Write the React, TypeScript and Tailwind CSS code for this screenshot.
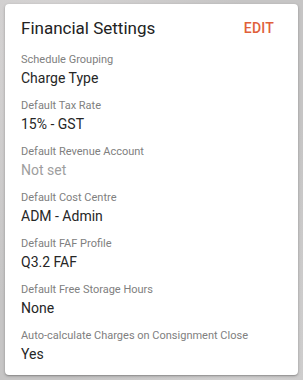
const fields = [
  { label: 'Schedule Grouping', value: 'Charge Type' },
  { label: 'Default Tax Rate', value: '15% - GST' },
  { label: 'Default Revenue Account', value: 'Not set', muted: true },
  { label: 'Default Cost Centre', value: 'ADM - Admin' },
  { label: 'Default FAF Profile', value: 'Q3.2 FAF' },
  { label: 'Default Free Storage Hours', value: 'None' },
  { label: 'Auto-calculate Charges on Consignment Close', value: 'Yes' },
];

export default function App() {
  return (
    <div
      className="w-[303px] h-[380px] overflow-hidden bg-[#c6c5c5] bg-[radial-gradient(ellipse_at_15%_10%,#d6d4d4_0%,transparent_55%),radial-gradient(ellipse_at_80%_95%,#d2d1d1_0%,transparent_50%)] pt-[4px] pl-[5px] pr-[5px]"
      style={{ fontFamily: 'Roboto, "Liberation Sans", sans-serif' }}
    >
      <div className="bg-white rounded-[4px] shadow-[0_1px_3px_rgba(0,0,0,0.25),0_1px_1px_rgba(0,0,0,0.12)] h-[371px] pt-3 pb-3 pl-4 pr-4">
        {/* Header */}
        <div className="flex items-center justify-between h-6">
          <h2 className="text-[17px] leading-6 text-[#222222] font-normal">Financial Settings</h2>
          <button className="text-[14px] leading-6 font-medium text-[#e0603a] tracking-[0.2px] px-2">EDIT</button>
        </div>

        {/* Fields */}
        <div className="mt-[12px] flex flex-col gap-[10px]">
          {fields.map((f) => (
            <div key={f.label}>
              <div className="text-[11px] leading-4 text-[#808080]">{f.label}</div>
              <div className={`text-[14px] leading-5 ${f.muted ? 'text-[#9e9e9e]' : 'text-[#262626]'}`}>{f.value}</div>
            </div>
          ))}
        </div>
      </div>
    </div>
  );
}
